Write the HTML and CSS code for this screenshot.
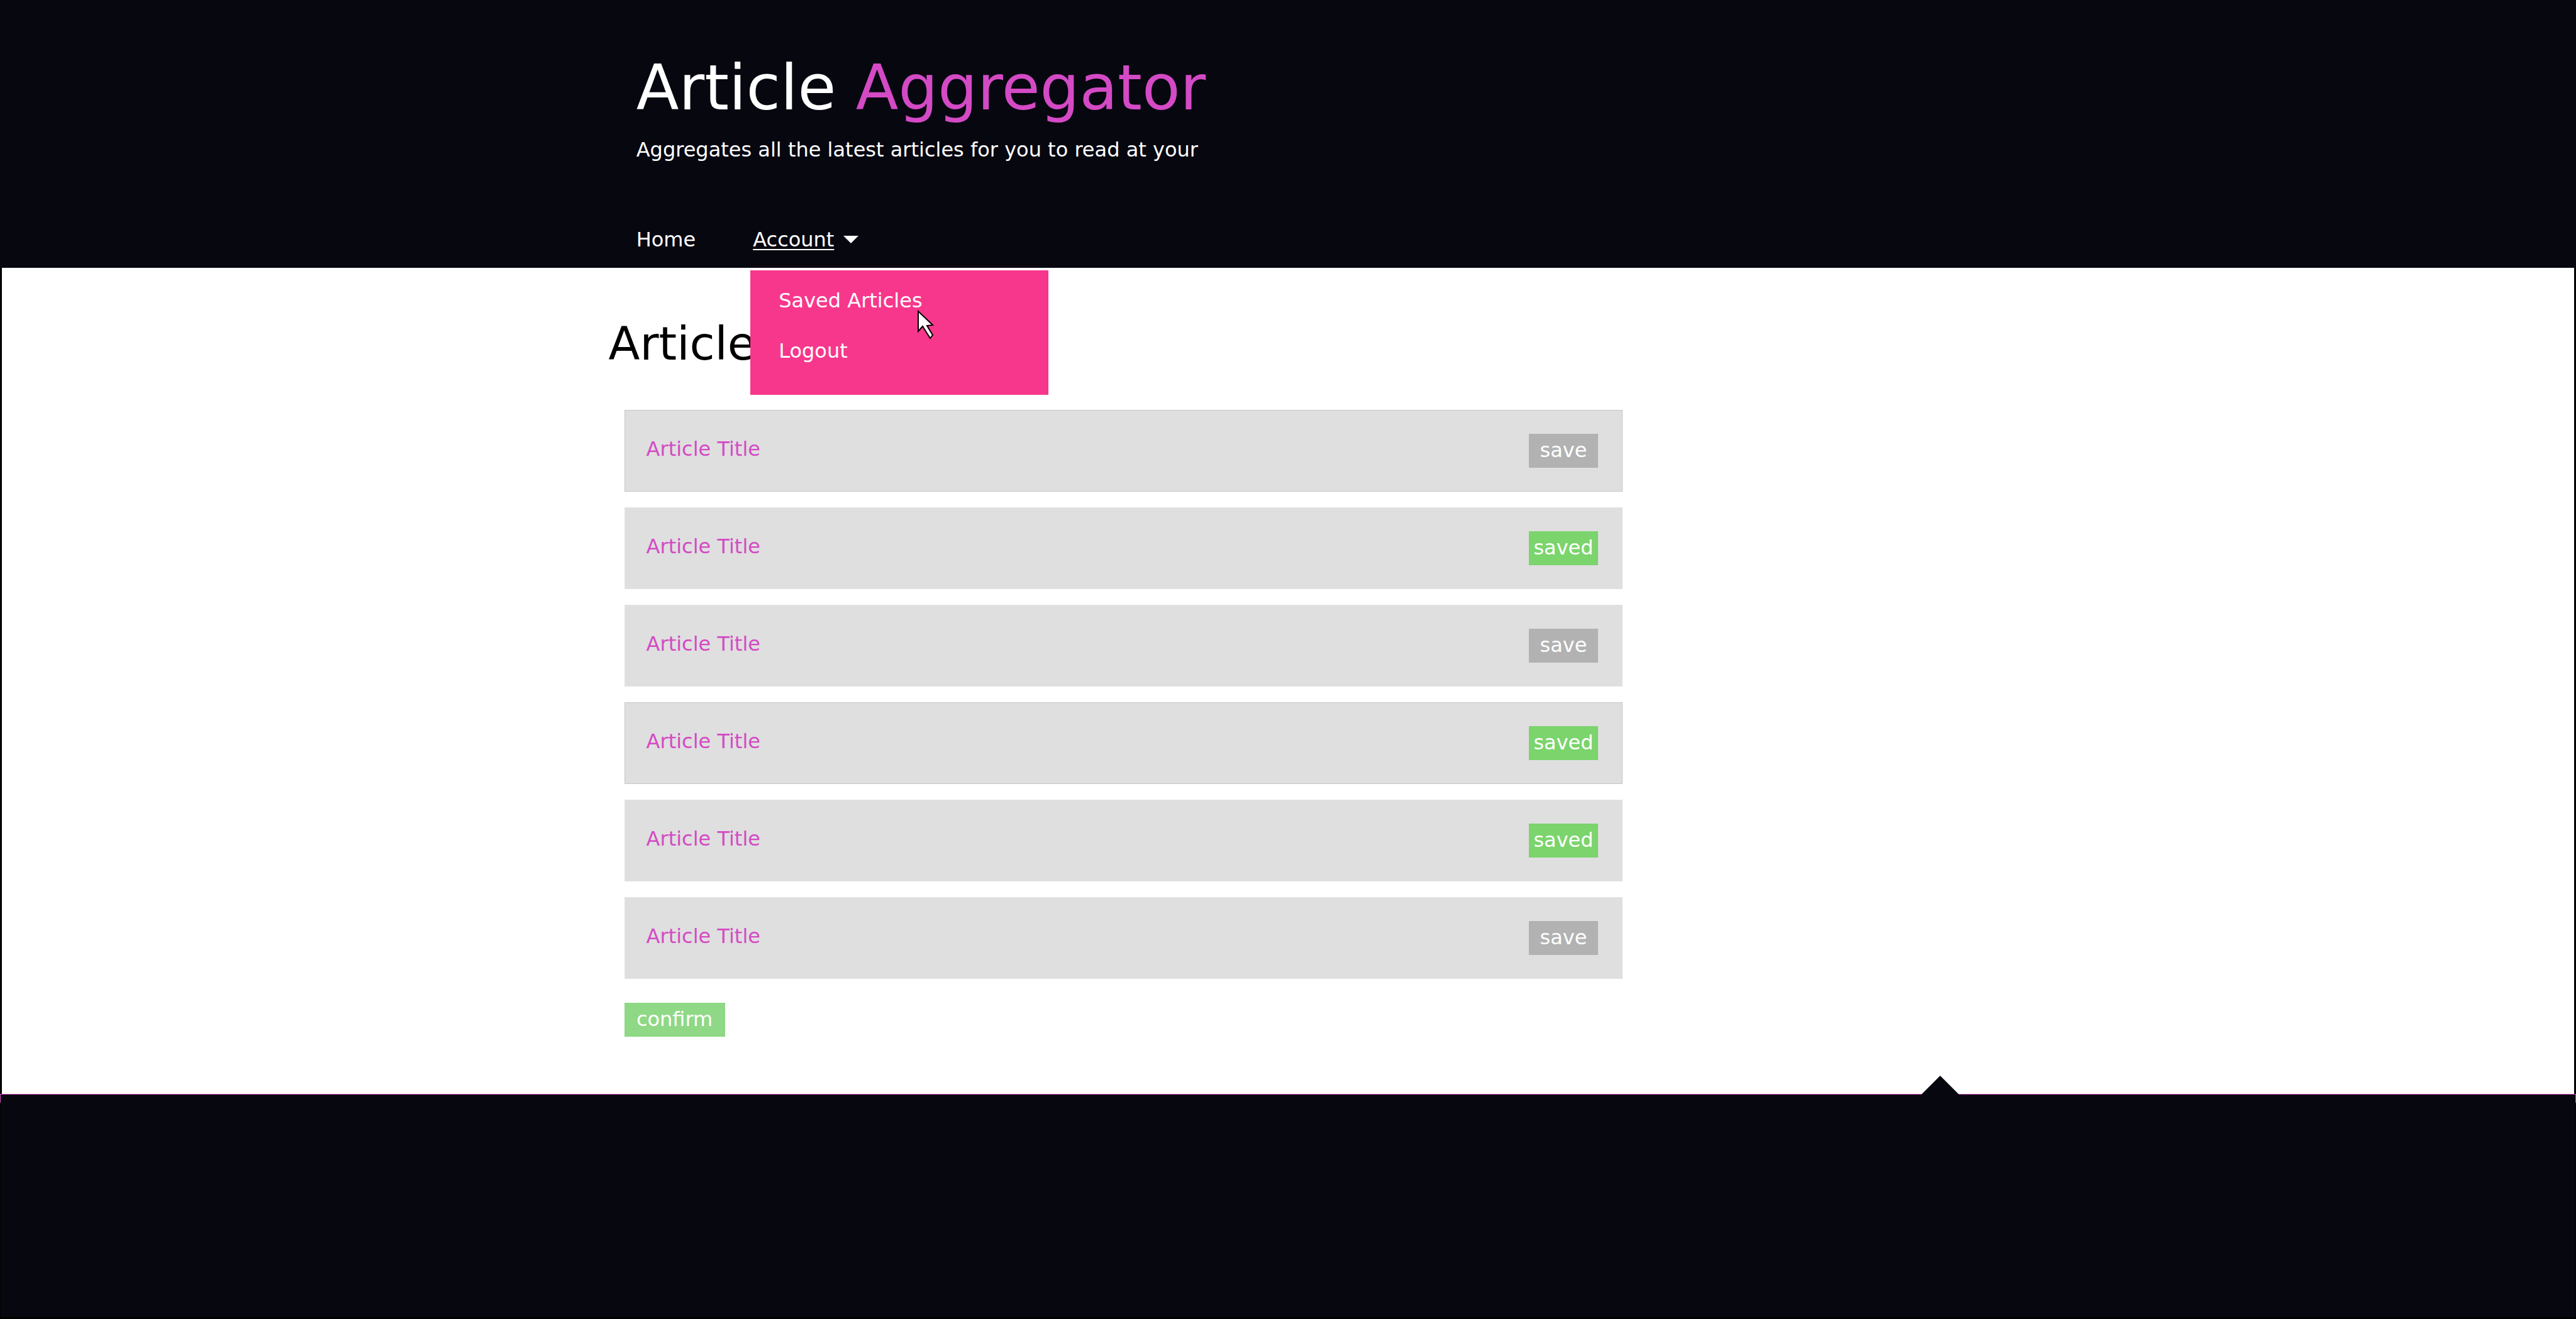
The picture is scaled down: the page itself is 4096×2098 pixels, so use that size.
FILE: index.html
```html
<!DOCTYPE html>
<html lang="en">
<head>
<meta charset="utf-8">
<title>Article Aggregator</title>
<link rel="stylesheet" href="styles.css">
</head>
<body>
<header class="site-header">
  <h1 class="brand">Article <span class="brand-accent">Aggregator</span></h1>
  <p class="tagline">Aggregates all the latest articles for you to read at your</p>
  <nav class="nav">
    <a class="nav-link" href="#">Home</a>
    <div class="account">
      <a class="nav-link account-link" href="#"><span class="account-label">Account</span><svg class="caret" viewBox="0 0 24 12" aria-hidden="true"><path d="M0 0H24L12 12Z" fill="#fff"/></svg></a>
      <div class="menu">
        <a class="menu-link" href="#">Saved Articles</a>
        <a class="menu-link" href="#">Logout</a>
        <svg class="pointer" viewBox="0 0 28 50" aria-hidden="true"><path d="M1 3V35L8 27L20 46L24 41L15 26L24 25Z" fill="#fff" stroke="#000" stroke-width="2"/></svg>
      </div>
    </div>
  </nav>
</header>
<main class="content">
  <h2 class="heading">Articles</h2>
  <ul class="articles">
    <li class="article"><a class="article-title" href="#">Article Title</a><button class="btn" type="button">save</button></li>
    <li class="article"><a class="article-title" href="#">Article Title</a><button class="btn btn-saved" type="button">saved</button></li>
    <li class="article"><a class="article-title" href="#">Article Title</a><button class="btn" type="button">save</button></li>
    <li class="article"><a class="article-title" href="#">Article Title</a><button class="btn btn-saved" type="button">saved</button></li>
    <li class="article"><a class="article-title" href="#">Article Title</a><button class="btn btn-saved" type="button">saved</button></li>
    <li class="article"><a class="article-title" href="#">Article Title</a><button class="btn" type="button">save</button></li>
  </ul>
  <button class="btn btn-confirm" type="button">confirm</button>
</main>
<footer class="site-footer">
  <svg class="notch" viewBox="0 0 60 30" aria-hidden="true"><path d="M0 30L30 0L60 30Z" fill="#070710"/></svg>
</footer>
</body>
</html>
```
FILE: styles.css
```css
* {
  box-sizing: border-box;
}

body {
  margin: 0;
  min-height: 100vh;
  display: flex;
  flex-direction: column;
  background: #000;
  color: #fff;
  font: 32px/40px "DejaVu Sans", sans-serif;
}

a {
  color: inherit;
  text-decoration: none;
}

.site-header {
  padding: 82px 0 25px 24.7%;
  background: #070710;
}

.brand {
  margin: 0;
  font-size: 99px;
  line-height: 116px;
  font-weight: 400;
}

.brand-accent {
  color: #d44ac5;
}

.tagline {
  margin: 20px 0 0;
}

.nav {
  display: flex;
  align-items: flex-start;
  gap: 91px;
  margin-top: 103px;
}

.account {
  position: relative;
}

.account-link {
  display: flex;
  align-items: center;
  gap: 15px;
}

.account-label {
  text-decoration: underline;
  text-decoration-thickness: 2px;
  text-underline-offset: 4px;
}

.caret {
  width: 24px;
  height: 12px;
}

.menu {
  position: absolute;
  z-index: 1;
  top: 69px;
  left: -4px;
  width: 474px;
  height: 198px;
  padding: 28px 45px;
  display: flex;
  flex-direction: column;
  gap: 40px;
  background: #f7378b;
}

.pointer {
  position: absolute;
  left: 266px;
  top: 62px;
  width: 28px;
  height: 50px;
}

.content {
  padding: 79px 0 91px 24.16%;
  margin: 0 3px;
  background: #fff;
}

.heading {
  margin: 0 0 0 -25px;
  color: #000;
  font-size: 73px;
  line-height: 84px;
  font-weight: 400;
}

.articles {
  width: 51.2%;
  margin: 63px 0 38px;
  padding: 0;
  list-style: none;
  display: grid;
  gap: 25px;
}

.article {
  height: 130px;
  padding: 0 38px 0 34px;
  display: flex;
  align-items: center;
  justify-content: space-between;
  border: 1px solid #e2e2e2;
  background: #dfdfdf;
}

.article:nth-child(3n + 1) {
  border-color: #c6c6c6;
}

.article-title {
  padding-bottom: 6px;
  color: #d44ac5;
}

.btn {
  width: 110px;
  height: 54px;
  padding: 0 0 2px;
  border: 0;
  background: #b2b2b2;
  color: #fff;
  font: inherit;
  text-align: center;
}

.btn-saved {
  background: #7bd46c;
}

.btn-confirm {
  display: block;
  width: 160px;
  background: #8fd885;
}

.site-footer {
  position: relative;
  flex: 1;
  border: solid #000;
  border-width: 0 1px 3px;
  background: #070710;
  box-shadow: inset 0 1px #d44ac5;
}

/* short accent ticks at both ends of the footer's top rule */
.site-footer::before {
  content: "";
  position: absolute;
  top: 0;
  left: -1px;
  right: -1px;
  height: 14px;
  border: solid #d44ac5;
  border-width: 0 1px;
}

.notch {
  position: absolute;
  left: 74.6%;
  top: -29px;
  width: 60px;
  height: 30px;
}
```
